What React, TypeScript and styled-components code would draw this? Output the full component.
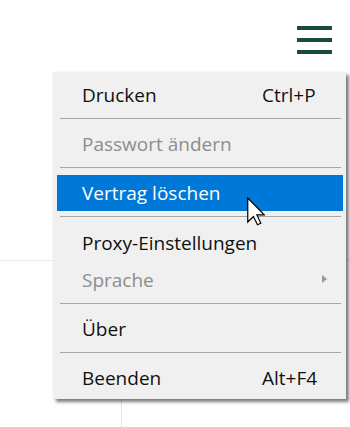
import React from "react";
import styled, { createGlobalStyle } from "styled-components";

const GlobalStyle = createGlobalStyle`
  html, body {
    margin: 0;
    padding: 0;
    background: #ffffff;
  }
  body {
    font-family: "Open Sans", "Noto Sans", "Liberation Sans", sans-serif;
  }
`;

const Page = styled.div`
  position: relative;
  width: 350px;
  height: 427px;
  overflow: hidden;
  display: flex;
  flex-direction: column;
`;

const Header = styled.header`
  height: 260px;
  display: flex;
  justify-content: flex-end;
  align-items: flex-start;
  padding: 26px 18px 0 0;
  box-sizing: border-box;
`;

const Burger = styled.button`
  width: 35px;
  padding: 0;
  border: 0;
  background: none;
  display: flex;
  flex-direction: column;
  gap: 8px;
  cursor: pointer;
`;

const Bar = styled.span`
  display: block;
  height: 4px;
  background: #1a4c3e;
`;

const Workspace = styled.main`
  flex: 1;
  display: grid;
  grid-template-columns: 122px 1fr;
  border-top: 1px solid #ebebeb;
`;

const Sidebar = styled.aside`
  border-right: 1px solid #e2e2e2;
`;

const Menu = styled.ul`
  position: absolute;
  top: 72px;
  left: 53px;
  width: 293px;
  margin: 0;
  padding: 5px 3px 3px 4px;
  box-sizing: border-box;
  list-style: none;
  background: #f0f0f0;
  box-shadow: 3px 3px 3px rgba(0, 0, 0, 0.5), 0 0 1px rgba(0, 0, 0, 0.15);
`;

const Item = styled.li<{ $disabled?: boolean; $active?: boolean; $tall?: boolean }>`
  position: relative;
  height: ${(p) => (p.$tall ? 37 : 36)}px;
  display: grid;
  grid-template-columns: 180px 1fr;
  align-items: center;
  padding-left: 25px;
  font-size: 19px;
  color: ${(p) => (p.$active ? "#ffffff" : p.$disabled ? "#8d8d8d" : "#111111")};
  background: ${(p) => (p.$active ? "#0078d7" : "transparent")};
  white-space: nowrap;
`;

const Shortcut = styled.span`
  color: #111111;
`;

const Separator = styled.li`
  height: 1px;
  margin: 5px 2px 7px 3px;
  background: #a6a6a6;
`;

const SubArrow = styled.span`
  position: absolute;
  right: 16px;
  top: 14px;
  width: 0;
  height: 0;
  border-top: 4px solid transparent;
  border-bottom: 4px solid transparent;
  border-left: 5px solid #9a9a9a;
`;

const Pointer = styled.svg`
  position: absolute;
  left: 247px;
  top: 197px;
`;

export default function App() {
  return (
    <>
      <GlobalStyle />
      <Page>
        <Header>
          <Burger aria-label="Menü">
            <Bar />
            <Bar />
            <Bar />
          </Burger>
        </Header>
        <Workspace>
          <Sidebar />
          <div />
        </Workspace>

        <Menu>
          <Item>
            <span>Drucken</span>
            <Shortcut>Ctrl+P</Shortcut>
          </Item>
          <Separator />
          <Item $disabled>
            <span>Passwort ändern</span>
          </Item>
          <Separator />
          <Item $active>
            <span>Vertrag löschen</span>
          </Item>
          <Separator />
          <Item $tall>
            <span>Proxy-Einstellungen</span>
          </Item>
          <Item $disabled $tall>
            <span>Sprache</span>
            <SubArrow />
          </Item>
          <Separator />
          <Item>
            <span>Über</span>
          </Item>
          <Separator />
          <Item>
            <span>Beenden</span>
            <Shortcut>Alt+F4</Shortcut>
          </Item>
        </Menu>

        <Pointer width="18" height="29" viewBox="0 0 12 19">
          <path
            d="M0.5 0.5 L0.5 16.5 L4.3 12.8 L7 18.3 L9.2 17.3 L6.6 11.8 L11.5 11.8 Z"
            fill="#ffffff"
            stroke="#000000"
            strokeWidth="0.8"
            strokeLinejoin="miter"
          />
        </Pointer>
      </Page>
    </>
  );
}
